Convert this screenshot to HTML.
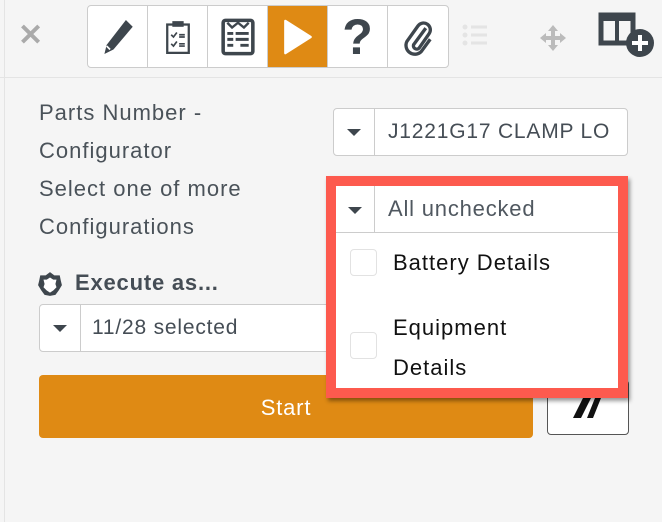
<!DOCTYPE html>
<html><head><style>
body{margin:0;width:662px;height:522px;background:#f5f5f5;font-family:"Liberation Sans",sans-serif;position:relative;overflow:hidden;color:#454d55}
.a{position:absolute}
.tb{left:87px;top:5px;width:360px;height:61px;border:1px solid #ccc;border-radius:4px;background:#fff;display:flex;overflow:hidden}
.tb div{width:59px;height:61px;border-right:1px solid #ccc;display:flex;align-items:center;justify-content:center;flex:none}
.tb div:last-child{border-right:none}
.lbl{font-size:22px;line-height:38px;color:#4a5259;letter-spacing:1px}
.sel{background:#fff;border:1px solid #ccc;border-radius:4px;height:46px}
.sel .ar{position:absolute;left:0;top:0;width:40px;height:46px;border-right:1px solid #ccc}
.sel .ar:after{content:"";position:absolute;left:13px;top:20px;border-left:7px solid transparent;border-right:7px solid transparent;border-top:7px solid #3e464d}
.sel span{position:absolute;left:54px;top:11px;font-size:21px;color:#454d55;white-space:nowrap;overflow:hidden;letter-spacing:0.8px}
.cb{position:absolute;width:25px;height:25px;border:1px solid #e2e2e2;border-radius:4px;background:#fff}
</style></head><body>
<div class="a" style="left:4px;top:0;width:1px;height:522px;background:#e4e4e4"></div>
<div class="a" style="left:0;top:77px;width:662px;height:1px;background:#e4e4e4"></div>
<div class="a" style="left:18px;top:18px;font-size:30px;color:#aaa;font-weight:bold">✕</div>
<div class="a tb">
<div><svg width="34" height="40" viewBox="0 0 30 34"><path d="M22 2l6 6-17 20-8 4 2-8z" fill="#3e464d"/><path d="M5 25l3 3" stroke="#fff" stroke-width="1.5"/></svg></div>
<div><svg width="26" height="34" viewBox="0 0 22 30"><rect x="1.5" y="4" width="19" height="25" fill="none" stroke="#3e464d" stroke-width="2"/><rect x="6" y="1" width="10" height="5" fill="#3e464d"/><path d="M5 13l2 2 3-4M5 21l2 2 3-4" stroke="#3e464d" stroke-width="1.5" fill="none"/><path d="M12 13h5M12 15h5M12 21h5M12 23h5" stroke="#3e464d" stroke-width="1.5"/></svg></div>
<div><svg width="34" height="38" viewBox="0 0 28 32"><rect x="1.5" y="2" width="25" height="28" rx="2" fill="none" stroke="#3e464d" stroke-width="3"/><path d="M5 4l4 4 5-4 5 4 4-4" stroke="#3e464d" stroke-width="2" fill="none"/><path d="M5 13h5M12 13h11M5 18h5M12 18h11M5 23h5M16 23h7" stroke="#3e464d" stroke-width="2.5"/></svg></div>
<div style="background:#df8a14"><svg width="30" height="38" viewBox="0 0 26 32"><path d="M2 2L24 16 2 30z" fill="#fff" stroke="#fff" stroke-width="2" stroke-linejoin="round"/></svg></div>
<div><span style="font-size:50px;font-weight:bold;color:#3e464d">?</span></div>
<div><svg width="30" height="40" viewBox="0 0 26 36"><path d="M20 10L9 25a3 3 0 0 0 5 3L23 15a6 6 0 0 0-10-7L3 22a8 8 0 0 0 13 9l8-11" fill="none" stroke="#3e464d" stroke-width="3"/></svg></div>
</div>
<svg class="a" style="left:462px;top:24px" width="26" height="22"><g fill="#e4e4e4"><circle cx="3" cy="3" r="2.5"/><circle cx="3" cy="11" r="2.5"/><circle cx="3" cy="19" r="2.5"/><rect x="9" y="1.5" width="16" height="3"/><rect x="9" y="9.5" width="16" height="3"/><rect x="9" y="17.5" width="16" height="3"/></g></svg>
<svg class="a" style="left:540px;top:25px" width="26" height="26" viewBox="0 0 26 26"><path d="M13 0l5 6h-3v5h5V8l6 5-6 5v-3h-5v5h3l-5 6-5-6h3v-5H6v3l-6-5 6-5v3h5V6H8z" fill="#bbb"/></svg>
<svg class="a" style="left:598px;top:12px" width="60" height="46" viewBox="0 0 60 46"><rect x="3" y="3" width="32" height="28" fill="none" stroke="#3e464d" stroke-width="5"/><rect x="17" y="3" width="4" height="28" fill="#3e464d"/><rect x="3" y="3" width="32" height="6" fill="#3e464d"/><circle cx="42" cy="31" r="14" fill="#3e464d"/><path d="M42 23v16M34 31h16" stroke="#fff" stroke-width="4"/></svg>
<div class="a lbl" style="left:39px;top:94px">Parts Number -<br>Configurator<br>Select one of more<br>Configurations</div>
<div class="a sel" style="left:333px;top:108px;width:293px"><div class="ar"></div><span style="width:230px">J1221G17 CLAMP LO</span></div>
<svg class="a" style="left:37px;top:271px" width="26" height="26" viewBox="0 0 24 24"><path d="M12 1l4 3 5 0 1 5 1 4-3 5-3 4-5 1-5-1-3-4-3-5 1-4 1-5 5 0z" fill="#3e464d"/><path d="M12 6l3 2h3l-1 4 1 3-3 3-3 2-3-2-3-3 1-3-1-4h3z" fill="#fff"/></svg>
<div class="a" style="left:75px;top:270px;font-size:22px;font-weight:bold;color:#454d55;letter-spacing:0.8px">Execute as...</div>
<div class="a sel" style="left:39px;top:304px;width:300px"><div class="ar"></div><span style="left:52px">11/28 selected</span></div>
<div class="a" style="left:39px;top:375px;width:494px;height:63px;background:#df8a14;border-radius:4px;color:#fff;font-size:22px;text-align:center;line-height:66px;letter-spacing:0.8px">Start</div>
<div class="a" style="left:547px;top:380px;width:80px;height:53px;border:1px solid #555;border-radius:4px;background:#fff"><svg style="position:absolute;left:25px;top:17px" width="32" height="22"><path d="M10 0h8L8 20H0zM22 0h6L20 20h-6z" fill="#111"/></svg></div>
<div class="a" style="left:326px;top:176px;width:282px;height:202px;border:10px solid #fd5a4e;background:#fff;box-shadow:2px 3px 4px rgba(0,0,0,.4)">
<div class="a" style="left:0;top:0;width:282px;height:46px;border-bottom:1px solid #ccc"><div class="a" style="left:0;top:0;width:38px;height:46px;border-right:1px solid #ccc"></div><div class="a" style="left:12px;top:21px;border-left:7px solid transparent;border-right:7px solid transparent;border-top:7px solid #3e464d"></div><div class="a" style="left:52px;top:10px;font-size:22px;color:#505860;letter-spacing:0.8px">All unchecked</div></div>
<div class="cb" style="left:14px;top:63px"></div>
<div class="a" style="left:57px;top:64px;font-size:22px;color:#111;letter-spacing:1px">Battery Details</div>
<div class="cb" style="left:14px;top:146px"></div>
<div class="a" style="left:57px;top:122px;font-size:22px;color:#111;line-height:40px;letter-spacing:1px">Equipment<br>Details</div>
</div>
</body></html>
